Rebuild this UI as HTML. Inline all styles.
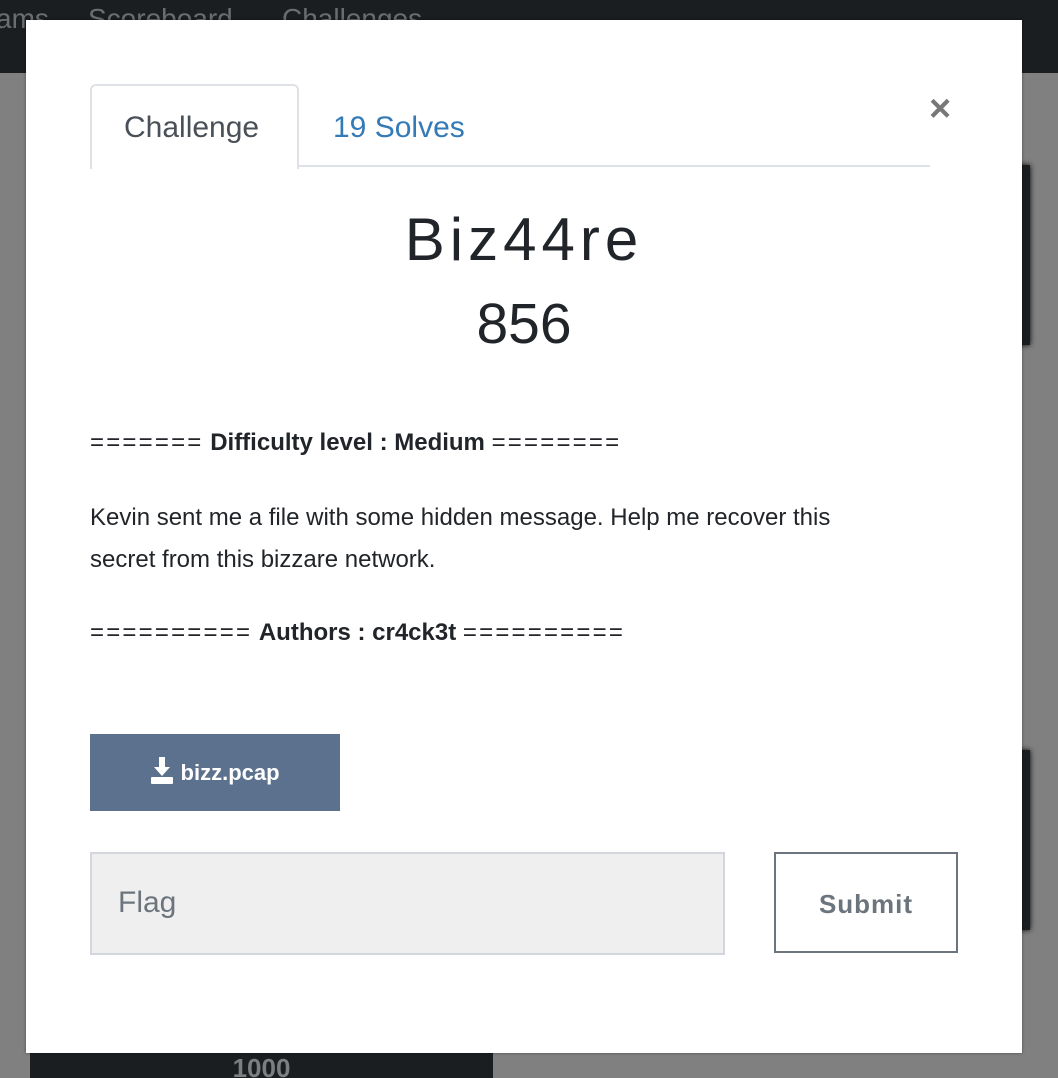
<!DOCTYPE html>
<html><head><style>
html,body{margin:0;width:1058px;height:1078px;overflow:hidden}
body{background:#808080;position:relative;font-family:"Liberation Sans",sans-serif}
.nav{position:absolute;left:0;top:0;width:1058px;height:73px;background:#1b1e21}
.nav span{position:absolute;top:0;color:#6b6e70;font-size:28px;line-height:34px}
.card{position:absolute;background:#1b1e21}
.modal{position:absolute;left:26px;top:20px;width:996px;height:1033px;background:#fff;box-shadow:0 0 3px rgba(0,0,0,.4)}
.abs{position:absolute}
.t{color:#212529;font-size:24px;line-height:42px}
.eq{letter-spacing:2.2px}
</style></head><body>
<div class="nav"><span style="left:-4px;top:2px">ams</span><span style="left:88px;top:2px">Scoreboard</span><span style="left:282px;top:2px">Challenges</span></div>
<div class="card" style="left:1018px;top:165px;width:12px;height:180px;box-shadow:0 0 6px #000"></div>
<div class="card" style="left:1018px;top:750px;width:12px;height:180px;box-shadow:0 0 6px #000"></div>
<div class="card" style="left:30px;top:1050px;width:463px;height:28px;overflow:hidden"><div style="text-align:center;color:#7c7f82;font-size:26px;font-weight:bold;padding-top:3px">1000</div></div>
<div class="modal">
 <div class="abs" style="left:64px;top:145px;width:840px;height:2px;background:#dee2e6"></div>
 <div class="abs" style="left:64px;top:64px;width:205px;height:83px;border:2px solid #dee2e6;border-bottom:none;border-radius:6px 6px 0 0;background:#fff"></div>
 <div class="abs" style="left:98px;top:91px;font-size:30px;color:#495057">Challenge</div>
 <div class="abs" style="left:307px;top:91px;font-size:30px;color:#337ab7">19 Solves</div>
 <div class="abs" style="left:903px;top:68px;font-size:38px;color:#777;font-weight:bold">×</div>
 <div class="abs" style="left:0;width:996px;top:185px;text-align:center;font-size:60px;font-weight:300;color:#212529;letter-spacing:5px">Biz44re</div>
 <div class="abs" style="left:0;width:996px;top:271px;text-align:center;font-size:57px;color:#212529">856</div>
 <div class="abs t" style="left:64px;top:402px"><span class="eq">=======</span> <b>Difficulty level : Medium</b> <span class="eq">========</span></div>
 <div class="abs t" style="left:64px;top:477px;width:800px">Kevin sent me a file with some hidden message. Help me recover this secret from this bizzare network.</div>
 <div class="abs t" style="left:64px;top:592px"><span class="eq">==========</span> <b>Authors : cr4ck3t</b> <span class="eq">==========</span></div>
 <div class="abs" style="left:64px;top:714px;width:250px;height:77px;background:#5b718d;color:#fff;font-size:22px;font-weight:bold;text-align:center;line-height:77px">
  <svg width="24" height="28" viewBox="0 0 24 28" style="vertical-align:-5px"><path d="M9 0h6v10h5l-8 9-8-9h5z" fill="#fff"/><rect x="1" y="20" width="22" height="7" rx="1" fill="#fff"/></svg> bizz.pcap</div>
 <div class="abs" style="left:64px;top:832px;width:631px;height:99px;background:#efefef;border:2px solid #d3d7dd"><span style="position:absolute;left:26px;top:32px;font-size:30px;color:#6c757d">Flag</span></div>
 <div class="abs" style="left:748px;top:832px;width:180px;height:97px;border:2px solid #6c757d;text-align:center;line-height:100px;font-size:26px;font-weight:bold;color:#6c757d;letter-spacing:1px">Submit</div>
</div>
</body></html>
